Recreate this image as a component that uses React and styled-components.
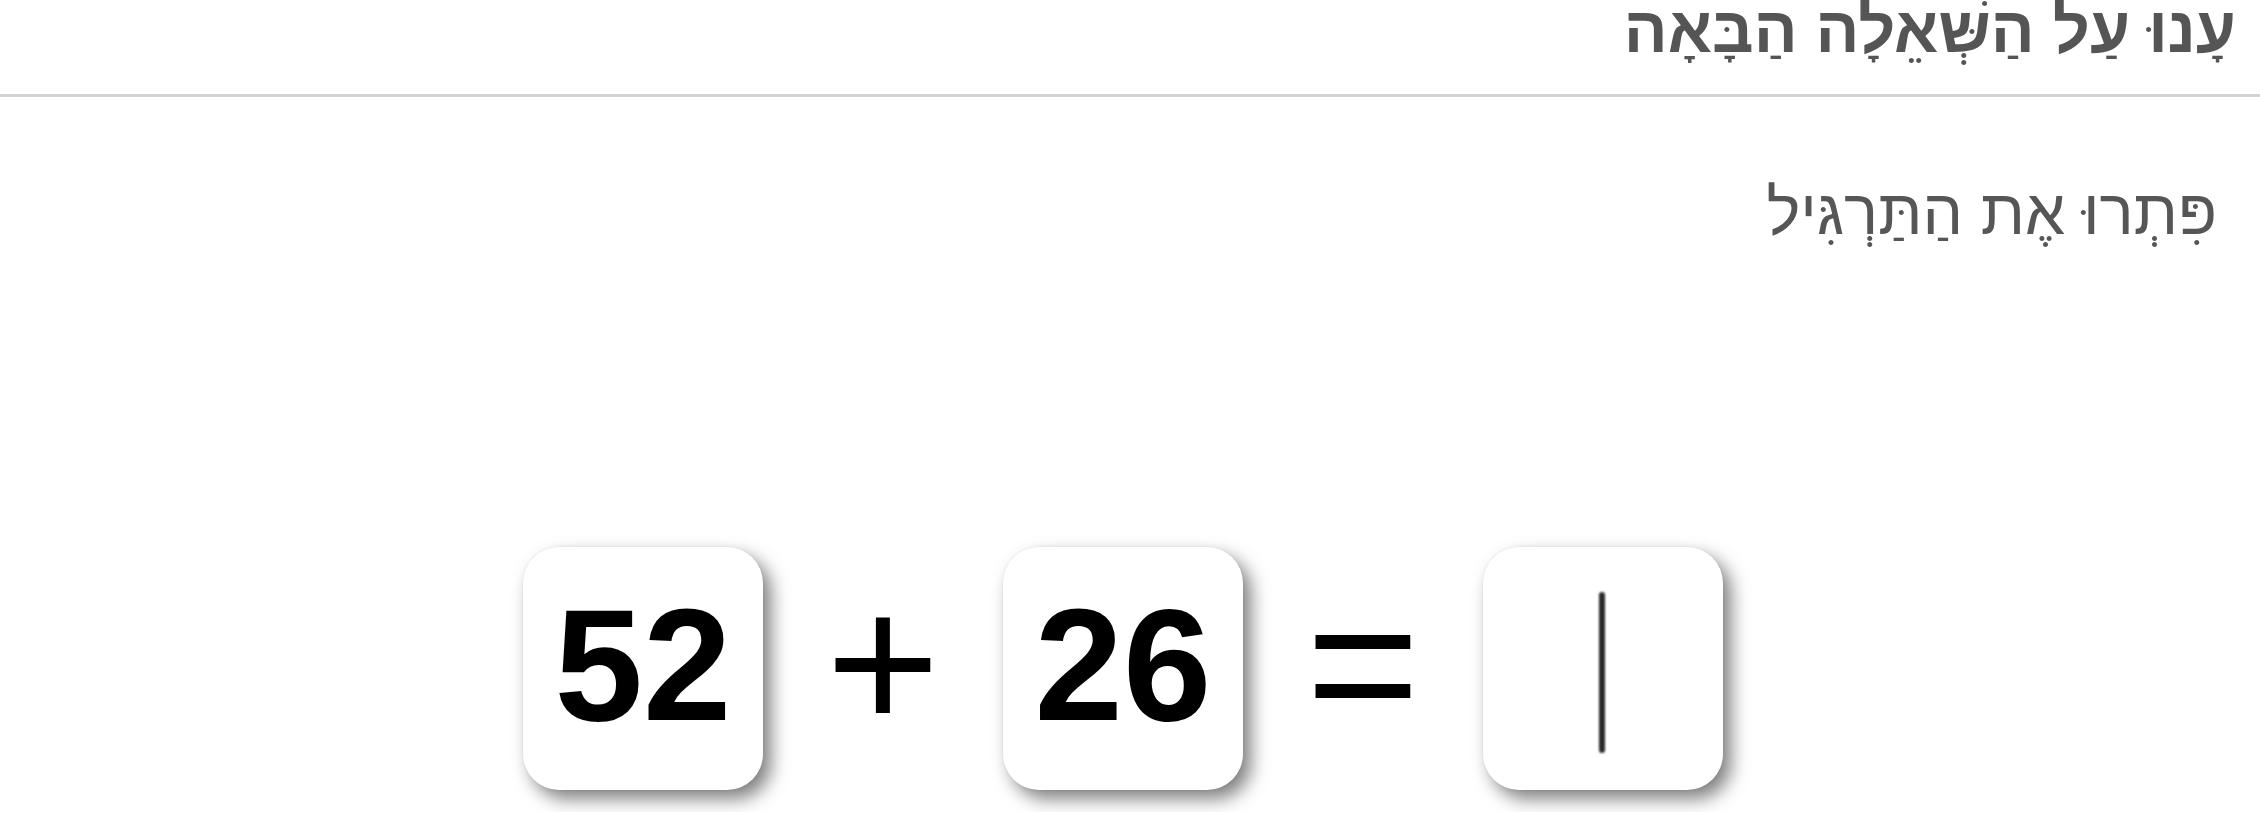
import React from "react";
import styled, { createGlobalStyle } from "styled-components";

const GlobalStyle = createGlobalStyle`
  html, body {
    margin: 0;
    padding: 0;
    background: #ffffff;
  }
  body {
    font-family: "Liberation Sans", Arial, sans-serif;
    color: #555555;
  }
`;

const Page = styled.div`
  direction: rtl;
  display: flex;
  flex-direction: column;
  padding-bottom: 22px;
`;

const Header = styled.header`
  padding: 0 24px 34px 24px;
  border-bottom: 3px solid #d3d3d3;
`;

const Title = styled.h1`
  margin: 0;
  font-family: "Liberation Sans", Arial, sans-serif;
  font-weight: 700;
  font-size: 65px;
  line-height: 60px;
  color: #555555;
`;

const Instruction = styled.p`
  margin: 79px 0 0 0;
  padding: 0 43px;
  font-family: "Liberation Sans", Arial, sans-serif;
  font-weight: 400;
  font-size: 64px;
  line-height: 73px;
  color: #565656;
`;

const Equation = styled.div`
  direction: ltr;
  display: flex;
  justify-content: center;
  align-items: center;
  margin-top: 298px;
  padding-right: 14px;
`;

const Card = styled.div`
  width: 240px;
  height: 243px;
  box-sizing: border-box;
  display: flex;
  align-items: center;
  justify-content: center;
  padding-bottom: 6px;
  background: #ffffff;
  border-radius: 36px;
  box-shadow: 8px 9px 18px rgba(0, 0, 0, 0.5), 0 0 3px rgba(0, 0, 0, 0.07);
`;

const Number = styled.span`
  font-family: "Liberation Sans", Arial, sans-serif;
  font-weight: 700;
  font-size: 159px;
  line-height: 1;
  color: #000000;
`;

const Operator = styled.span`
  width: 240px;
  text-align: center;
  font-family: "Liberation Sans", Arial, sans-serif;
  font-weight: 400;
  font-size: 195px;
  line-height: 1;
  color: #000000;
  padding-bottom: ${(p) => p.$lift}px;
`;

const Caret = styled.span`
  display: block;
  width: 6px;
  height: 161px;
  margin-left: -3px;
  margin-top: 13px;
  background: #2a2a2a;
  border-radius: 3px;
  filter: blur(1.3px);
`;

export default function App() {
  return (
    <>
      <GlobalStyle />
      <Page>
        <Header>
          <Title>עָנוּ עַל הַשְּׁאֵלָה הַבָּאָה</Title>
        </Header>
        <Instruction>פִּתְרוּ אֶת הַתַּרְגִּיל</Instruction>
        <Equation>
          <Card>
            <Number>52</Number>
          </Card>
          <Operator $lift={12}>+</Operator>
          <Card>
            <Number>26</Number>
          </Card>
          <Operator $lift={10}>=</Operator>
          <Card>
            <Caret />
          </Card>
        </Equation>
      </Page>
    </>
  );
}
